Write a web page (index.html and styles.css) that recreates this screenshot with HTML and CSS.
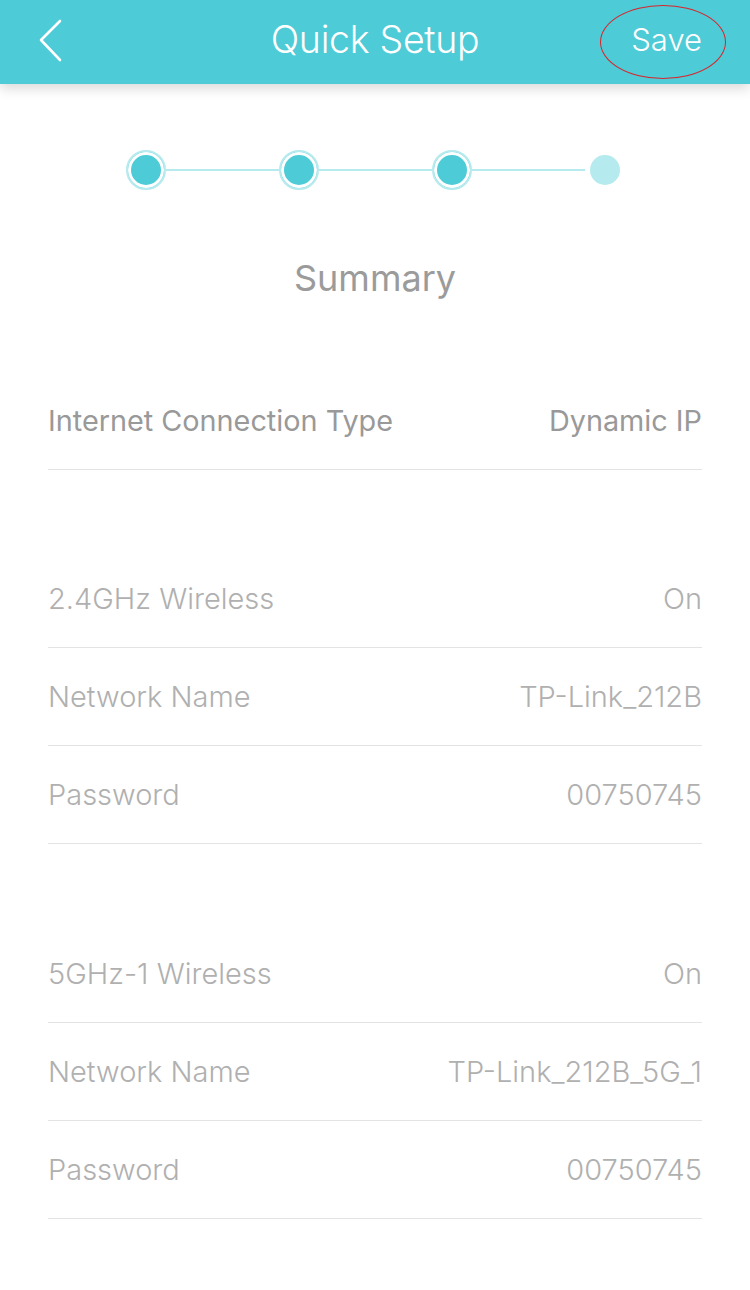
FILE: index.html
```html
<!DOCTYPE html>
<html>
<head>
  <meta charset="utf-8" />
  <title>Quick Setup</title>
  <link rel="stylesheet" href="styles.css">
</head>
<body>
  <div class="topbar">
    <button class="back-btn" aria-label="Back">
      <svg width="30" height="44" viewBox="0 0 30 44">
        <polyline points="22,2 3,21 22,41" fill="none" stroke="#fff" stroke-width="2.6" stroke-linecap="round" stroke-linejoin="round" />
      </svg>
    </button>
    <h1>Quick Setup</h1>
    <button class="save-btn">Save</button>
  </div>

  <div class="steps">
    <span class="step done"></span>
    <span class="step-line"></span>
    <span class="step done"></span>
    <span class="step-line"></span>
    <span class="step done"></span>
    <span class="step-line"></span>
    <span class="step"></span>
  </div>

  <h2 class="title">Summary</h2>

  <section class="group first">
    <div class="row strong">
      <span>Internet Connection Type</span>
      <span>Dynamic IP</span>
    </div>
  </section>

  <section class="group second">
    <div class="row">
      <span>2.4GHz Wireless</span>
      <span>On</span>
    </div>
    <div class="row">
      <span>Network Name</span>
      <span>TP-Link_212B</span>
    </div>
    <div class="row">
      <span>Password</span>
      <span>00750745</span>
    </div>
  </section>

  <section class="group">
    <div class="row">
      <span>5GHz-1 Wireless</span>
      <span>On</span>
    </div>
    <div class="row">
      <span>Network Name</span>
      <span>TP-Link_212B_5G_1</span>
    </div>
    <div class="row">
      <span>Password</span>
      <span>00750745</span>
    </div>
  </section>
</body>
</html>
```

FILE: styles.css
```css
* {
  margin: 0;
  padding: 0;
  box-sizing: border-box;
}

body {
  font-family: Inter, Roboto, 'Liberation Sans', sans-serif;
  background: #fff;
  width: 750px;
  min-height: 1290px;
  overflow: hidden;
}

.topbar {
  height: 84px;
  background: #4dcbd6;
  display: flex;
  align-items: center;
  justify-content: space-between;
  padding: 0 48px 6px 38px;
  box-shadow: 0 4px 12px rgba(0, 0, 0, 0.16);
  position: relative;
}

.topbar h1 {
  position: absolute;
  left: 0;
  right: 0;
  text-align: center;
  font-size: 37.5px;
  font-weight: 300;
  color: #fff;
  letter-spacing: -0.3px;
  pointer-events: none;
}

.back-btn,
.save-btn {
  background: none;
  border: none;
  color: #fff;
  font-family: inherit;
  cursor: pointer;
}

.back-btn {
  display: flex;
  width: 30px;
  height: 44px;
  margin-top: 4px;
}

.save-btn {
  font-size: 31px;
  font-weight: 300;
  position: relative;
}

/* red annotation circle around Save */
.save-btn::after {
  content: '';
  position: absolute;
  left: -31px;
  top: -16px;
  width: 124px;
  height: 72px;
  border: 1.5px solid #d8262c;
  border-radius: 50%;
}

.steps {
  display: flex;
  align-items: center;
  justify-content: center;
  margin-top: 64px;
  height: 44px;
}

.step {
  width: 30px;
  height: 30px;
  border-radius: 50%;
  background: #b5eaee;
  margin: 0 5px;
}

.step.done {
  width: 40px;
  height: 40px;
  margin: 0;
  background: #4dcbd6;
  border: 2px solid #b5eaee;
  box-shadow: inset 0 0 0 3px #fff;
}

.step-line {
  width: 113px;
  height: 2px;
  background: #b5eaee;
}

.title {
  text-align: center;
  font-size: 36px;
  font-weight: 400;
  color: #9b9b9b;
  margin-top: 64px;
  line-height: 44px;
}

.group {
  padding: 0 48px;
  margin-top: 81px;
}

.group.first {
  margin-top: 72px;
}

.group.second {
  margin-top: 80px;
}

.row {
  height: 98px;
  display: flex;
  align-items: center;
  justify-content: space-between;
  border-bottom: 1px solid #e3e3e3;
  font-size: 29px;
  font-weight: 300;
  color: #b0b0b0;
}

.row.strong {
  color: #999;
  font-weight: 400;
  font-size: 28.8px;
}
```
